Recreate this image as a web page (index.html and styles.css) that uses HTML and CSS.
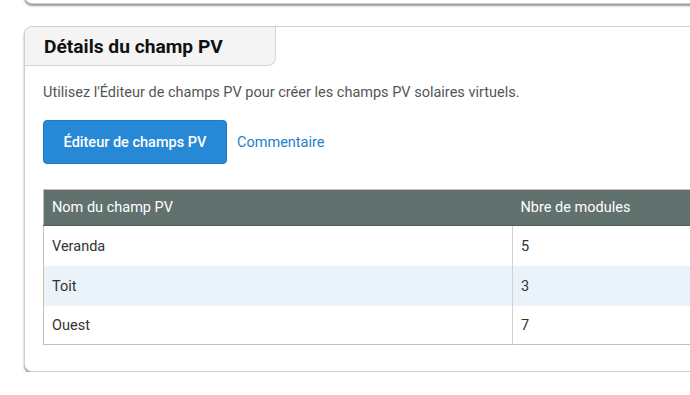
FILE: index.html
```html
<!DOCTYPE html>
<html lang="fr">
  <head>
    <meta charset="UTF-8" />
    <meta name="viewport" content="width=device-width, initial-scale=1.0" />
    <title>Détails du champ PV</title>
    <link rel="stylesheet" href="styles.css">
  </head>
  <body>
    <div class="card card-prev"></div>

    <div class="card">
      <div class="card-tab">
        <h2>Détails du champ PV</h2>
      </div>
      <div class="card-body">
        <p class="intro">Utilisez l'Éditeur de champs PV pour créer les champs PV solaires virtuels.</p>
        <div class="actions">
          <button class="btn">Éditeur de champs PV</button>
          <a href="#" class="link">Commentaire</a>
        </div>
        <table class="fields">
          <thead>
            <tr>
              <th class="col-name">Nom du champ PV</th>
              <th>Nbre de modules</th>
            </tr>
          </thead>
          <tbody>
            <tr><td class="col-name">Veranda</td><td>5</td></tr>
            <tr><td class="col-name">Toit</td><td>3</td></tr>
            <tr class="last"><td class="col-name">Ouest</td><td>7</td></tr>
          </tbody>
        </table>
      </div>
    </div>
  </body>
</html>
```

FILE: styles.css
```css
body {
  margin: 0;
  padding: 0 0 0 24px;
  overflow: hidden;
  background: #fff;
  font-family: Roboto, "Liberation Sans", sans-serif;
  color: #333;
}

.card {
  width: 760px;
  border: 1px solid #cfcfcf;
  border-radius: 8px;
  background: #fff;
  box-shadow: 0 2px 2px rgba(0, 0, 0, 0.4);
}

.card-prev {
  height: 40px;
  margin-top: -38px;
  margin-bottom: 22px;
}

.card-tab {
  width: 251px;
  height: 39px;
  box-sizing: border-box;
  background: #f4f4f4;
  border-right: 1px solid #d6d6d6;
  border-bottom: 1px solid #d6d6d6;
  border-radius: 8px 0 8px 0;
}

.card-tab h2 {
  margin: 0;
  padding: 8px 0 0 19px;
  font-size: 19.2px;
  font-weight: 700;
  color: #111;
}

.card-body {
  padding: 17px 0 26px 18px;
}

.intro {
  margin: 0 0 17px;
  font-size: 14.5px;
  color: #555;
  line-height: 20px;
}

.actions {
  display: flex;
  align-items: center;
  gap: 10px;
  margin-bottom: 25px;
}

.btn {
  width: 184px;
  height: 44px;
  background: #2789d5;
  border: 1px solid #1f7cc4;
  border-radius: 4px;
  color: #fff;
  font-family: inherit;
  font-size: 14.5px;
  font-weight: 500;
  cursor: pointer;
}

.link {
  color: #1f7fcf;
  font-size: 14.5px;
  text-decoration: none;
}

.fields {
  width: 720px;
  border-collapse: collapse;
  border-top: 1px solid #c9c2a6;
  border-left: 1px solid #c9c2a6;
  border-bottom: 1px solid #c9c2a6;
  font-size: 14.5px;
}

.fields th {
  background: #61716e;
  color: #fff;
  font-weight: 400;
  text-align: left;
  height: 35px;
  padding: 0 8px;
  border-bottom: 1px solid #4d5a58;
}

.fields td {
  height: 40px;
  padding: 0 8px;
  color: #333;
}

.fields .last td {
  height: 38px;
}

.fields .col-name {
  width: 452px;
}

.fields td.col-name {
  border-right: 1px solid #d2d2d2;
}

.fields tbody tr:nth-child(2) {
  background: #ebf3fa;
}
```
